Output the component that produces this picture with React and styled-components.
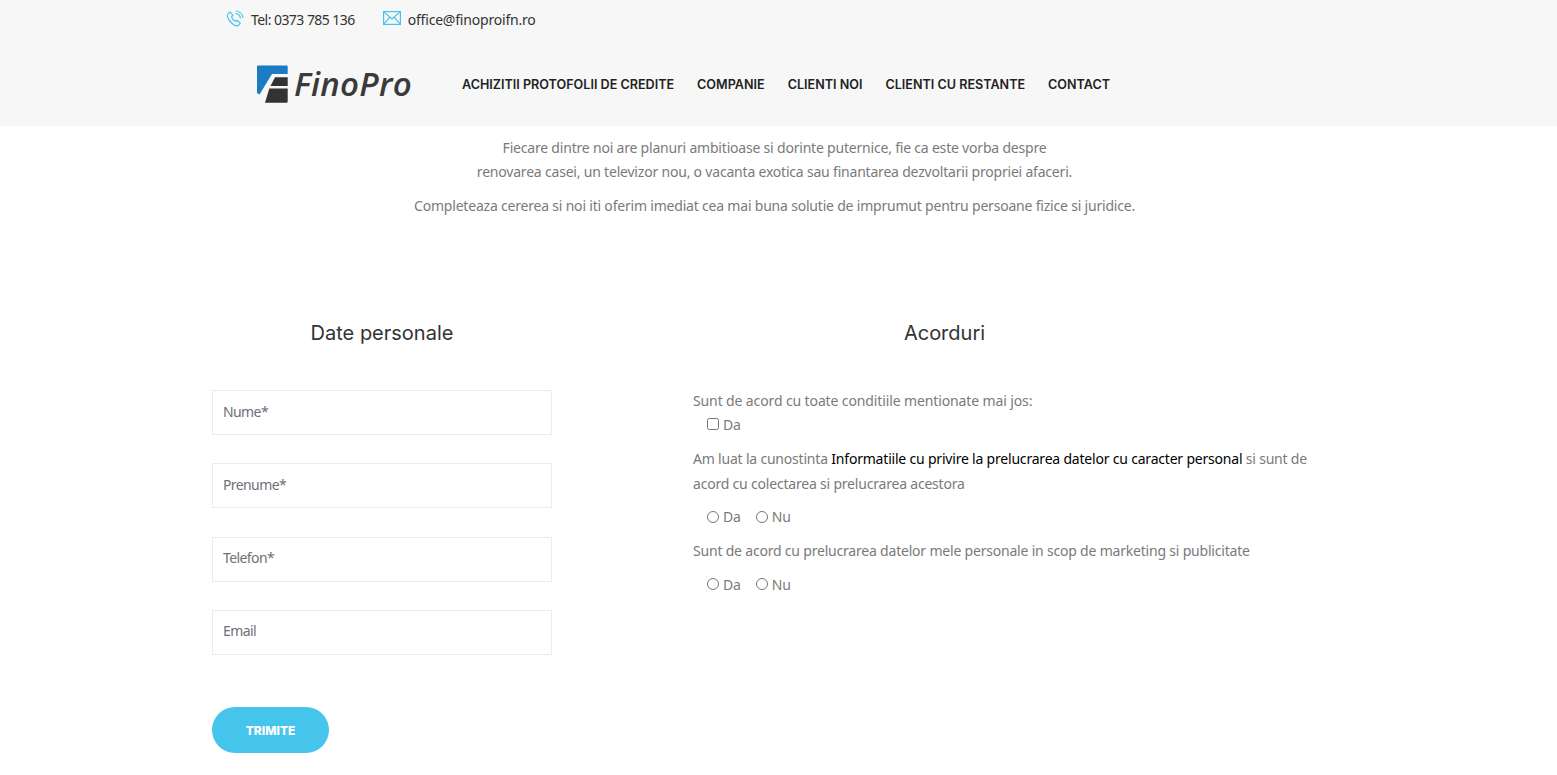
import React from "react";
import styled, { createGlobalStyle } from "styled-components";

const GlobalStyle = createGlobalStyle`
  * {
    box-sizing: border-box;
  }

  body {
    margin: 0;
    background: #fff;
    font-family: "Noto Sans", "Liberation Sans", sans-serif;
    color: #7a7a7a;
  }
`;

const Header = styled.header`
  height: 126px;
  background: #f7f7f7;
`;

const TopBar = styled.div`
  display: flex;
  align-items: center;
  gap: 28px;
  height: 38px;
  padding-left: 226px;
`;

const Contact = styled.div`
  display: flex;
  align-items: center;
  gap: 7px;
  font-size: 14px;
  letter-spacing: ${(p) => p.$spacing}px;
  color: #333;
`;

const NavRow = styled.div`
  display: flex;
  align-items: center;
  height: 88px;
  padding: 4px 0 0 256px;
`;

const Logo = styled.div`
  display: flex;
  align-items: center;
  gap: 4px;
  width: 206px;
`;

const LogoText = styled.span`
  font-family: "Open Sans", sans-serif;
  font-style: italic;
  font-weight: 600;
  font-size: 33px;
  line-height: 38px;
  letter-spacing: 0.3px;
  color: #3a3a3a;
`;

const Nav = styled.nav`
  display: flex;
  gap: 23px;
`;

const NavLink = styled.a`
  font-family: "Inter", sans-serif;
  font-weight: 600;
  font-size: 12.6px;
  color: #222;
  white-space: nowrap;
`;

const Intro = styled.section`
  padding: 10px 8px 0 0;
  text-align: center;
  font-size: 14px;
  letter-spacing: -0.2px;
`;

const IntroLine = styled.p`
  margin: 0 0 ${(p) => p.$gap || 0}px;
  line-height: 24px;
`;

const Columns = styled.main`
  display: flex;
  gap: 30px;
  padding: 103px 0 0 212px;
`;

const PersonalCol = styled.div`
  width: 340px;
`;

const AgreementCol = styled.div`
  width: 725px;
`;

const Title = styled.h2`
  margin: 0 0 45px;
  height: 24px;
  line-height: 24px;
  text-align: center;
  font-family: "Inter", sans-serif;
  font-weight: 400;
  font-size: 20px;
  color: #333;
`;

const Fields = styled.form`
  display: flex;
  flex-direction: column;
  gap: 28.33px;
`;

const Field = styled.input`
  width: 340px;
  height: 45px;
  padding: 0 10px 3px;
  border: 1px solid #ebebeb;
  background: #fff;
  font-family: "Noto Sans", sans-serif;
  font-size: 14px;
  letter-spacing: -0.6px;

  &::placeholder {
    color: #6f6f78;
    opacity: 1;
  }
`;

const Submit = styled.button`
  align-self: flex-start;
  width: 117px;
  height: 46px;
  margin-top: 23.67px;
  padding: 2px 0 0;
  border: 0;
  border-radius: 23px;
  background: #45c4ec;
  color: #fff;
  font-family: "Inter", sans-serif;
  font-weight: 800;
  font-size: 12px;
`;

const Agreements = styled.div`
  margin-top: -2px;
  padding-left: 111px;
  font-size: 14px;
  letter-spacing: -0.2px;
`;

const Statement = styled.p`
  margin: ${(p) => p.$top || 0}px 0 0;
  line-height: 25px;
  letter-spacing: ${(p) => p.$spacing ?? -0.2}px;
`;

const TermsLink = styled.a`
  color: #000;
`;

const Choices = styled.div`
  display: flex;
  align-items: center;
  gap: 15px;
  height: ${(p) => p.$height}px;
  padding-left: 14px;
`;

const Choice = styled.label`
  display: flex;
  align-items: center;
  gap: 4px;
`;

const Box = styled.input`
  width: 12px;
  height: 12px;
  margin: 0;
`;

const MailSvg = styled.svg`
  margin-bottom: 3px;
`;

const PhoneIcon = () => (
  <svg width="18" height="18" viewBox="0 0 18 18" fill="none" stroke="#45c4ec" strokeWidth="1.2">
    <path d="M2.2 3.6 4.3 2l2.5 3.4-1.3 1.4c.5 1.700 2.300 3.800 4.200 4.700l1.400-1.100 3.100 2.700-1.700 2.200c-1 .9-2.600.6-4.200-.2C5.500 13.500 2.900 10.500 1.700 7.300c-.5-1.500-.3-2.800.5-3.700Z" />
    <path d="M9.500 3.500c2.600.2 4.700 2.300 5 5" />
    <path d="M9.800 1c3.900.2 6.800 3.200 7.200 7" />
  </svg>
);

const MailIcon = () => (
  <MailSvg width="18" height="14" viewBox="0 0 18 14" fill="none" stroke="#45c4ec" strokeWidth="1.2">
    <rect x=".6" y=".6" width="16.800" height="12.800" />
    <path d="M.6.600 9 8l8.400-7.400M.6 13.400l6-7M17.400 13.400l-6-7" />
  </MailSvg>
);

// blue wedge on top, dark blocks below, the white F is the gap between them
const LogoMark = () => (
  <svg width="34" height="38" viewBox="0 0 34 38">
    <path d="M1 1.500C1 .8 1.500.5 2 .5h28.500c.8 0 1.200.5 1.200 1.200V9H16L3.500 29.500 1 28Z" fill="#1b7cc4" />
    <path d="M19 12.300h12.700V21H14.500Z" fill="#333" />
    <path d="M13.300 23.500h18.400v13c0 .8-.4 1.200-1.200 1.200H9Z" fill="#333" />
  </svg>
);

const navItems = [
  "ACHIZITII PROTOFOLII DE CREDITE",
  "COMPANIE",
  "CLIENTI NOI",
  "CLIENTI CU RESTANTE",
  "CONTACT",
];

const fields = ["Nume*", "Prenume*", "Telefon*", "Email"];

const YesNo = ({ name, height }) => (
  <Choices $height={height}>
    <Choice>
      <Box type="radio" name={name} />
      Da
    </Choice>
    <Choice>
      <Box type="radio" name={name} />
      Nu
    </Choice>
  </Choices>
);

export default function App() {
  return (
    <>
      <GlobalStyle />
      <Header>
        <TopBar>
          <Contact $spacing={-0.55}>
            <PhoneIcon />
            Tel: 0373 785 136
          </Contact>
          <Contact $spacing={-0.2}>
            <MailIcon />
            office@finoproifn.ro
          </Contact>
        </TopBar>
        <NavRow>
          <Logo>
            <LogoMark />
            <LogoText>FinoPro</LogoText>
          </Logo>
          <Nav>
            {navItems.map((item) => (
              <NavLink key={item}>{item}</NavLink>
            ))}
          </Nav>
        </NavRow>
      </Header>
      <Intro>
        <IntroLine>Fiecare dintre noi are planuri ambitioase si dorinte puternice, fie ca este vorba despre</IntroLine>
        <IntroLine $gap={10}>renovarea casei, un televizor nou, o vacanta exotica sau finantarea dezvoltarii propriei afaceri.</IntroLine>
        <IntroLine>Completeaza cererea si noi iti oferim imediat cea mai buna solutie de imprumut pentru persoane fizice si juridice.</IntroLine>
      </Intro>
      <Columns>
        <PersonalCol>
          <Title>Date personale</Title>
          <Fields>
            {fields.map((f) => (
              <Field key={f} placeholder={f} />
            ))}
            <Submit type="button">TRIMITE</Submit>
          </Fields>
        </PersonalCol>
        <AgreementCol>
          <Title>Acorduri</Title>
          <Agreements>
            <Statement $spacing={-0.12}>Sunt de acord cu toate conditiile mentionate mai jos:</Statement>
            <Choices $height={22}>
              <Choice>
                <Box type="checkbox" />
                Da
              </Choice>
            </Choices>
            <Statement $top={11}>
              Am luat la cunostinta <TermsLink>Informatiile cu privire la prelucrarea datelor cu caracter personal</TermsLink> si sunt de acord cu colectarea si prelucrarea acestora
            </Statement>
            <YesNo name="info" height={41} />
            <Statement $top={1}>Sunt de acord cu prelucrarea datelor mele personale in scop de marketing si publicitate</Statement>
            <YesNo name="marketing" height={42} />
          </Agreements>
        </AgreementCol>
      </Columns>
    </>
  );
}
